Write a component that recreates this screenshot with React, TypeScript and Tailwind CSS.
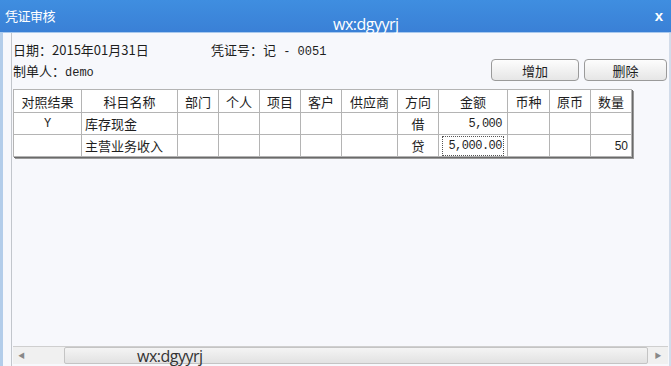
import { useState } from "react";

const cols = [
  { title: "对照结果", w: "w-[68px]" },
  { title: "科目名称", w: "w-[96px]" },
  { title: "部门", w: "w-[41px]" },
  { title: "个人", w: "w-[41px]" },
  { title: "项目", w: "w-[41px]" },
  { title: "客户", w: "w-[41px]" },
  { title: "供应商", w: "w-[56px]" },
  { title: "方向", w: "w-[41px]" },
  { title: "金额", w: "w-[69px]" },
  { title: "币种", w: "w-[42px]" },
  { title: "原币", w: "w-[41px]" },
  { title: "数量", w: "w-[41px]" },
];

const rows = [
  { check: "Y", name: "库存现金", dir: "借", amount: "5,000", qty: "" },
  { check: "", name: "主营业务收入", dir: "贷", amount: "5,000.00", qty: "50" },
];

const cjk = "font-['SimSun','Noto_Sans_CJK_SC',sans-serif]";
const mono = "font-['Liberation_Mono','DejaVu_Sans_Mono',monospace]";

function Cell({ children, className = "" }: { children?: React.ReactNode; className?: string }) {
  return <td className={`h-[22px] border border-[#b4b4b4] px-[3px] p-0 ${className}`}>{children}</td>;
}

export default function App() {
  const [focused] = useState(1);

  return (
    <div className={`relative w-[671px] h-[366px] overflow-hidden flex flex-col bg-[#f7f8fc] ${cjk} text-[13px] text-[#1e1e1e]`}>
      {/* 标题栏 */}
      <div className="h-[33px] shrink-0 flex items-start justify-between pt-[6px] px-[5px] bg-gradient-to-b from-[#3f8ee0] to-[#3a80d6] border-b border-[#a9c9ee] text-white">
        <span className="text-[13px] tracking-[-0.5px]">凭证审核</span>
        <span className="mr-[3px] mt-[1px] font-['Liberation_Sans',sans-serif] font-bold text-[15px] leading-[18px]">x</span>
      </div>

      <div className="flex-1 flex border-l-[3px] border-l-[#b3cdea] border-r-[2px] border-r-[#d2dcea]">
        <div className="flex-1 flex flex-col ml-[8px] border-l border-[#c2c6cc] pl-[1px] pr-[1px]">
          {/* 表头信息 */}
          <div className="h-[56px] relative">
            <div className="flex pt-[9px] leading-[16px]">
              <span className="w-[198px]">日期：2015年01月31日</span>
              <span>
                凭证号：记<span className={`${mono} text-[12px] whitespace-pre`}> - 0051</span>
              </span>
            </div>
            <div className="flex items-end justify-between">
              <span className="pt-[3px] leading-[16px]">
                制单人：<span className={`${mono} text-[12px]`}>demo</span>
              </span>
              <div className="flex gap-[5px] mr-[1px] mt-[-4px]">
                <button className="w-[88px] h-[22px] rounded-[4px] border border-[#9a9a9a] bg-gradient-to-b from-[#fdfdfd] to-[#e6e6e6] text-[13px] leading-none">
                  增加
                </button>
                <button className="w-[83px] h-[22px] rounded-[4px] border border-[#9a9a9a] bg-gradient-to-b from-[#fdfdfd] to-[#e6e6e6] text-[13px] leading-none">
                  删除
                </button>
              </div>
            </div>
          </div>

          {/* 分录表格 */}
          <div className="flex items-start">
            <div className="shadow-[1px_1px_0_0_#6a6a6a,2px_2px_0_0_#9a9a9a]">
              <table className="border-collapse table-fixed bg-white text-[13px] leading-none">
                <thead>
                  <tr>
                    {cols.map((c) => (
                      <th key={c.title} className={`${c.w} h-[23px] border border-[#b4b4b4] font-normal text-center p-0`}>
                        {c.title}
                      </th>
                    ))}
                  </tr>
                </thead>
                <tbody>
                  {rows.map((r, i) => (
                    <tr key={r.name}>
                      <Cell className={`text-center ${mono} text-[12px]`}>{r.check}</Cell>
                      <Cell>{r.name}</Cell>
                      <Cell />
                      <Cell />
                      <Cell />
                      <Cell />
                      <Cell />
                      <Cell className="text-center">{r.dir}</Cell>
                      <Cell className={`${mono} text-[12px] tracking-[-0.5px]`}>
                        {i === focused ? (
                          <div className="h-[20px] flex items-center justify-end pr-[1px] border border-dotted border-[#555]">
                            {r.amount}
                          </div>
                        ) : (
                          <div className="text-right pr-[2px]">{r.amount}</div>
                        )}
                      </Cell>
                      <Cell />
                      <Cell />
                      <Cell className="text-right font-['Liberation_Sans',sans-serif] text-[12px]">{r.qty}</Cell>
                    </tr>
                  ))}
                </tbody>
              </table>
            </div>
          </div>

          <div className="flex-1" />

          {/* 横向滚动条 */}
          <div className="h-[18px] mb-[2px] flex border-t border-[#cfcfcf] bg-[#f0f0f0]">
            <div className="w-[51px] flex items-center pl-[5px] text-[#888] text-[7px]">◀</div>
            <div className="flex-1 border border-[#c4c4c4] rounded-[2px] bg-gradient-to-b from-[#f4f4f4] to-[#e2e2e2]" />
            <div className="w-[20px] flex items-center justify-center text-[#888] text-[7px]">▶</div>
          </div>
        </div>
      </div>

      {/* 水印 */}
      <span className="absolute left-[333px] top-[12px] text-white text-[16px] font-['Open_Sans',sans-serif] tracking-[-0.5px]">
        wx:dgyyrj
      </span>
      <span className="absolute left-[137px] top-[344px] text-[#333] text-[16px] font-['Open_Sans',sans-serif] tracking-[-0.5px]">
        wx:dgyyrj
      </span>
    </div>
  );
}
